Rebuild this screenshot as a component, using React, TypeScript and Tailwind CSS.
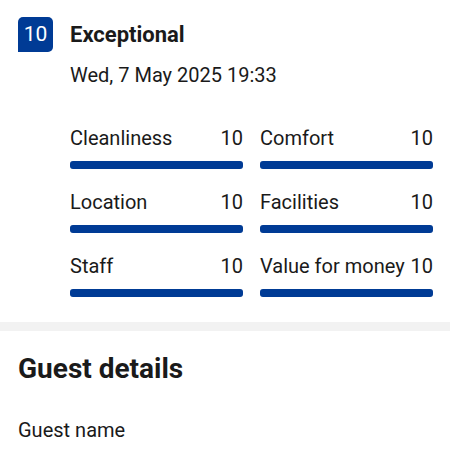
const scores = [
  { label: "Cleanliness", value: 10 },
  { label: "Comfort", value: 10 },
  { label: "Location", value: 10 },
  { label: "Facilities", value: 10 },
  { label: "Staff", value: 10 },
  { label: "Value for money", value: 10 },
];

function ScoreBar({ label, value }: { label: string; value: number }) {
  return (
    <div className="flex flex-col">
      <div className="flex justify-between items-center h-[28px] text-[20px] text-[#1a1a1a]">
        <span className="whitespace-nowrap">{label}</span>
        <span>{value}</span>
      </div>
      <div className="mt-[9px] h-[8px] rounded-[3px] bg-[#e7e7e7]">
        <div
          className="h-full rounded-[3px] bg-[#003b95]"
          style={{ width: `${value * 10}%` }}
        />
      </div>
    </div>
  );
}

export default function App() {
  return (
    <div className="w-[450px] h-[450px] overflow-hidden bg-white font-['Roboto',sans-serif]">
      <div className="pl-[18px] pr-[17px] pt-[17px]">
        <div className="flex gap-[17px]">
          <div className="w-[35px] h-[35px] shrink-0 rounded-[5px] rounded-bl-none bg-[#003b95] text-white text-[21px] flex items-center justify-center">
            10
          </div>
          <div className="flex flex-col">
            <div className="h-[35px] flex items-center text-[22px] font-bold text-[#1a1a1a]">
              Exceptional
            </div>
            <div className="mt-[9px] h-[28px] flex items-center text-[20px] text-[#1a1a1a]">
              Wed, 7 May 2025 19:33
            </div>
          </div>
        </div>

        <div className="ml-[52px] mt-[35px] grid grid-cols-2 gap-x-[17px] gap-y-[19px]">
          {scores.map((s) => (
            <ScoreBar key={s.label} label={s.label} value={s.value} />
          ))}
        </div>
      </div>

      <div className="mt-[25px] h-[9px] bg-[#f2f2f2]" />

      <div className="px-[18px]">
        <h2 className="mt-[20px] h-[36px] flex items-center text-[28px] font-bold text-[#1a1a1a]">
          Guest details
        </h2>
        <div className="mt-[29px] h-[28px] flex items-center text-[20px] text-[#1a1a1a]">
          Guest name
        </div>
      </div>
    </div>
  );
}
